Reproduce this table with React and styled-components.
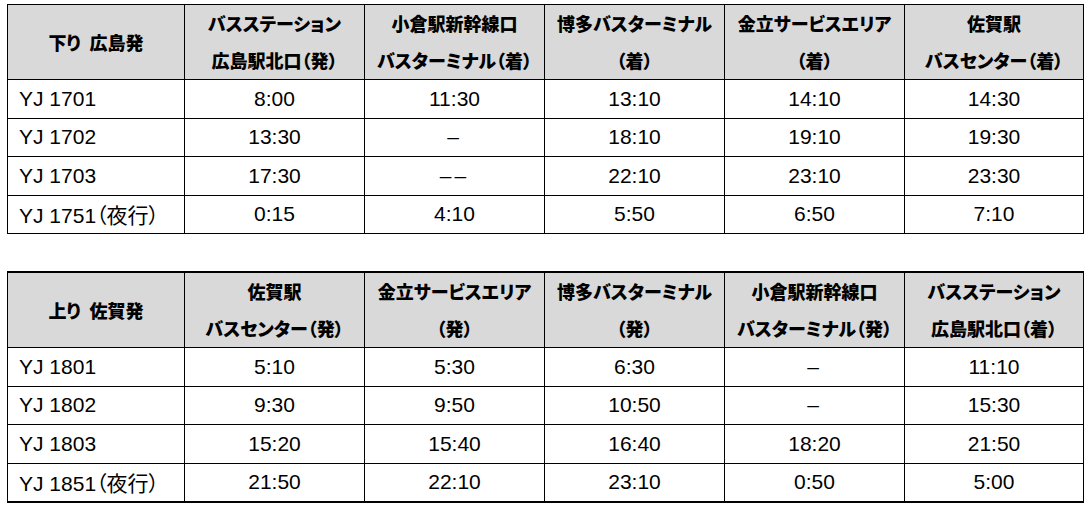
import React from 'react';
import styled, { createGlobalStyle } from 'styled-components';

const Global = createGlobalStyle`
  html, body {
    margin: 0;
    padding: 0;
    background: #fff;
  }
  body {
    font-family: "Liberation Sans", "Noto Sans CJK JP", sans-serif;
    color: #000;
  }
`;

const Page = styled.div`
  display: flex;
  flex-direction: column;
  gap: 37px;
  padding: 4px 0 0 7px;
  width: 1076px;
`;

const Table = styled.table`
  width: 1076px;
  border-collapse: collapse;
  table-layout: fixed;
  border: 1px solid #000;
  ${({ $heavy }) => ($heavy ? 'border-top: 2px solid #000; border-bottom: 2px solid #000;' : '')}
`;

const HeadCell = styled.th`
  background: #d9d9d9;
  border: 1px solid #000;
  height: 73px;
  padding: 0;
  text-align: center;
  vertical-align: middle;
  font-family: "Noto Sans CJK JP", sans-serif;
  font-weight: 900;
  font-size: 18px;
  line-height: 37px;
  font-feature-settings: "palt";
  white-space: nowrap;
`;

const Cell = styled.td`
  border: 1px solid #000;
  height: 37.5px;
  padding: 0 0 0 ${({ $left }) => ($left ? '11px' : '0')};
  text-align: ${({ $left }) => ($left ? 'left' : 'center')};
  vertical-align: middle;
  font-size: 21px;
  font-feature-settings: "palt";
  white-space: nowrap;
`;

const Dash = styled.span`
  letter-spacing: 3px;
`;

const widths = [177, 180, 180, 180, 180, 179];

const down = {
  title: '下り\u2002広島発',
  heads: [
    ['バスステーション', '広島駅北口（発）'],
    ['小倉駅新幹線口', 'バスターミナル（着）'],
    ['博多バスターミナル', '（着）'],
    ['金立サービスエリア', '（着）'],
    ['佐賀駅', 'バスセンター（着）'],
  ],
  rows: [
    ['YJ 1701', '8:00', '11:30', '13:10', '14:10', '14:30'],
    ['YJ 1702', '13:30', '–', '18:10', '19:10', '19:30'],
    ['YJ 1703', '17:30', '––', '22:10', '23:10', '23:30'],
    ['YJ 1751（夜行）', '0:15', '4:10', '5:50', '6:50', '7:10'],
  ],
};

const up = {
  title: '上り\u2002佐賀発',
  heads: [
    ['佐賀駅', 'バスセンター（発）'],
    ['金立サービスエリア', '（発）'],
    ['博多バスターミナル', '（発）'],
    ['小倉駅新幹線口', 'バスターミナル（発）'],
    ['バスステーション', '広島駅北口（着）'],
  ],
  rows: [
    ['YJ 1801', '5:10', '5:30', '6:30', '–', '11:10'],
    ['YJ 1802', '9:30', '9:50', '10:50', '–', '15:30'],
    ['YJ 1803', '15:20', '15:40', '16:40', '18:20', '21:50'],
    ['YJ 1851（夜行）', '21:50', '22:10', '23:10', '0:50', '5:00'],
  ],
};

function Timetable({ data, heavy }) {
  return (
    <Table $heavy={heavy}>
      <colgroup>
        {widths.map((w, i) => (
          <col key={i} style={{ width: w }} />
        ))}
      </colgroup>
      <thead>
        <tr>
          <HeadCell>{data.title}</HeadCell>
          {data.heads.map((h, i) => (
            <HeadCell key={i}>
              {h[0]}
              <br />
              {h[1]}
            </HeadCell>
          ))}
        </tr>
      </thead>
      <tbody>
        {data.rows.map((r, i) => (
          <tr key={i}>
            {r.map((c, j) => (
              <Cell key={j} $left={j === 0}>
                {c.startsWith('–') ? <Dash>{c}</Dash> : c}
              </Cell>
            ))}
          </tr>
        ))}
      </tbody>
    </Table>
  );
}

export default function App() {
  return (
    <>
      <Global />
      <Page>
        <Timetable data={down} />
        <Timetable data={up} heavy />
      </Page>
    </>
  );
}
